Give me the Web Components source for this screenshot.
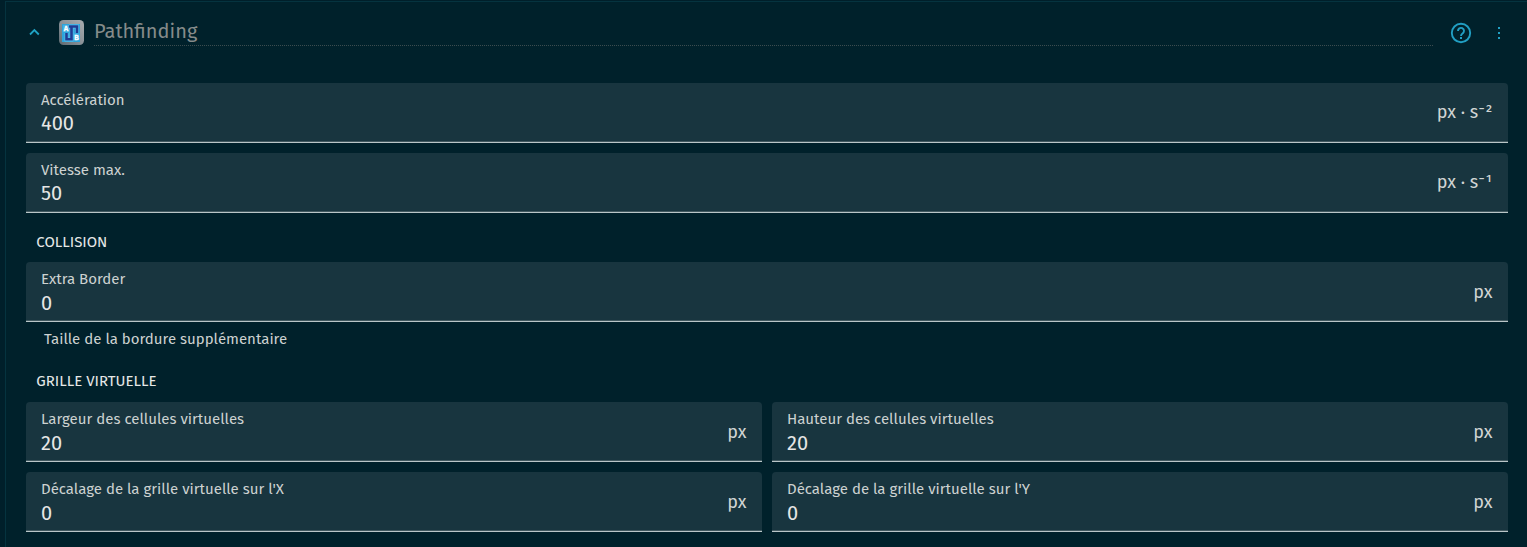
<!DOCTYPE html>
<html lang="fr">
<head>
<meta charset="utf-8">
<title>Pathfinding</title>
<style>
html, body { margin: 0; height: 100%; background: #00202b; overflow: hidden; }
body { font-family: "Fira Sans", "Noto Sans", sans-serif; color: #d5d8d8; }
</style>
</head>
<body>
<behavior-panel></behavior-panel>
<script>
const define = (name, html, setup) => {
  const template = document.createElement('template');
  template.innerHTML = html;
  customElements.define(name, class extends HTMLElement {
    connectedCallback() {
      if (this.shadowRoot) return;
      this.attachShadow({ mode: 'open' }).append(template.content.cloneNode(true));
      if (setup) setup(this, this.shadowRoot);
    }
  });
};

define('behavior-icon', `
<style>:host { display: block; width: 25px; height: 25px; } svg { display: block; }
text { font: bold 7.5px "Liberation Mono", monospace; fill: #fff; stroke: #fff; stroke-width: .3; }</style>
<svg width="25" height="25" viewBox="0 0 25 25">
  <defs><linearGradient id="g" x1="1" y1="0" x2="0" y2="1">
    <stop offset="0" stop-color="#a9adb0"/><stop offset=".5" stop-color="#8a9298"/><stop offset="1" stop-color="#5d6970"/>
  </linearGradient></defs>
  <rect width="25" height="25" rx="4.5" fill="url(#g)"/>
  <rect x="3" y="4" width="18" height="18" fill="#2da4dc"/>
  <path d="M10 6.5H18V13M12.5 6.5V19.5H7.5V13" fill="none" stroke="#5cc4ee" stroke-width="3.8"/>
  <path d="M10 6.5H18V13M12.5 6.5V19.3H7.5V13" fill="none" stroke="#203c94" stroke-width="2.6"/>
  <rect x="4" y="5" width="6" height="7" fill="#45afe2"/>
  <rect x="14.5" y="13.5" width="6" height="7" fill="#45afe2"/>
  <text x="4.8" y="10.8">A</text><text x="15.2" y="19.7">B</text>
</svg>`);

define('behavior-header', `
<style>
:host { display: flex; align-items: flex-start; height: 81px; box-sizing: border-box; padding: 18px 25px 0 22px; }
svg { display: block; flex: none; }
.chevron { margin-top: 6px; }
behavior-icon { margin-left: 19px; flex: none; }
.title { flex: 1; margin-left: 10px; height: 25px; border-bottom: 1px dotted #3c4c4f; color: #858b8a; font-size: 20px; line-height: 22px; }
.help { margin: 2px 0 0 17px; }
.more { margin: 5px 0 0 24px; }
</style>
<svg class="chevron" width="12" height="12" viewBox="0 0 12 12"><path d="M2 8.5 6.4 4 10.8 8.5" fill="none" stroke="#1fa3c4" stroke-width="1.8"/></svg>
<behavior-icon></behavior-icon>
<div class="title">Pathfinding</div>
<svg class="help" width="22" height="22" viewBox="0 0 22 22"><circle cx="11" cy="11" r="9.2" fill="none" stroke="#219fc3" stroke-width="1.9"/><path d="M8 9a3 3 0 1 1 4.9 2.2C11.8 12 11 12.5 11 14" fill="none" stroke="#219fc3" stroke-width="1.9"/><rect x="10" y="15" width="2" height="2" fill="#219fc3"/></svg>
<svg class="more" width="6" height="16" viewBox="0 0 6 16"><path d="M2 2h2v2H2zM2 7h2v2H2zM2 12h2v2H2z" fill="#219fc3"/></svg>`);

define('number-field', `
<style>
:host { display: flex; box-sizing: border-box; height: 60px; padding: 0 15.5px 0 15px; align-items: center; justify-content: space-between;
  background: linear-gradient(#b9c6c8, #b9c6c8) bottom / 100% 1px no-repeat, linear-gradient(#415960, #415960) 0 58px / 100% 1px no-repeat, #18353f;
  border-radius: 4px 4px 0 0; }
.entry { align-self: flex-start; padding-top: 7px; }
.label { font-size: 15px; line-height: 20px; color: #cdd2d1; }
.value { font-size: 20px; line-height: 26px; color: #e6e6e5; margin-top: var(--drop, 0px); }
.unit { font-size: 18px; line-height: 24px; color: #d0d4d3; margin-top: calc(-2px + 2 * var(--drop, 0px)); }
</style>
<div class="entry"><div class="label"></div><div class="value"></div></div>
<div class="unit"></div>`, (host, root) => {
  for (const name of ['label', 'value', 'unit'])
    root.querySelector('.' + name).textContent = host.getAttribute(name);
});

define('section-title', `
<style>:host { display: block; padding-left: 10.3px; font-size: 15px; line-height: 20px; color: #e6e8e7; }</style><slot></slot>`);

define('field-row', `
<style>:host { display: grid; grid-auto-flow: column; grid-auto-columns: 1fr; gap: 10px; margin-bottom: 10px; }</style><slot></slot>`);

define('behavior-panel', `
<style>
:host { display: block; box-sizing: border-box; height: 547px; padding: 1px 0 0 5px; background: #001f2a; }
.card { height: 546px; box-sizing: border-box; border: solid #05333f; border-width: 1px 0 0 1px; background: #00212b; }
main { padding: 0 19px 0 20px; }
.collision { margin-top: 19px; margin-bottom: 10px; }
.grid { margin-top: 22px; margin-bottom: 11px; }
.section { --drop: 1px; }
.help { font-size: 15px; line-height: 20px; color: #cdd2d1; margin: -3px 0 0 18px; }
</style>
<div class="card">
  <behavior-header></behavior-header>
  <main>
    <field-row><number-field label="Accélération" value="400" unit="px · s⁻²"></number-field></field-row>
    <field-row><number-field label="Vitesse max." value="50" unit="px · s⁻¹"></number-field></field-row>
    <section-title class="collision">COLLISION</section-title>
    <field-row class="section"><number-field label="Extra Border" value="0" unit="px"></number-field></field-row>
    <div class="help">Taille de la bordure supplémentaire</div>
    <section-title class="grid">GRILLE VIRTUELLE</section-title>
    <field-row class="section">
      <number-field label="Largeur des cellules virtuelles" value="20" unit="px"></number-field>
      <number-field label="Hauteur des cellules virtuelles" value="20" unit="px"></number-field>
    </field-row>
    <field-row class="section">
      <number-field label="Décalage de la grille virtuelle sur l'X" value="0" unit="px"></number-field>
      <number-field label="Décalage de la grille virtuelle sur l'Y" value="0" unit="px"></number-field>
    </field-row>
  </main>
</div>`);
</script>
</body>
</html>
